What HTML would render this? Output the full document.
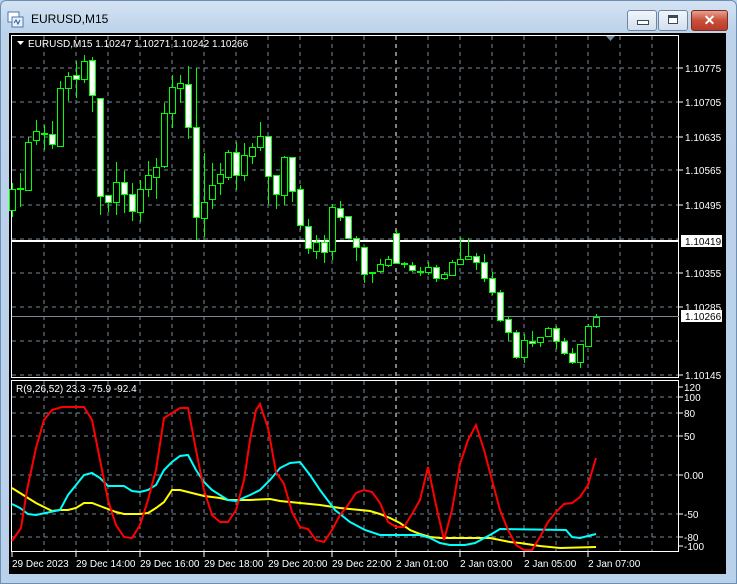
<!DOCTYPE html>
<html><head><meta charset="utf-8"><style>
html,body{margin:0;padding:0;width:737px;height:584px;overflow:hidden;background:#b9d1ea;font-family:"Liberation Sans",sans-serif}
#win{position:absolute;left:0;top:0;width:735px;height:582px;border:1px solid #6d8fb3;border-radius:6px 6px 0 0;background:linear-gradient(#d4e3f3,#bcd3ea 30px,#b9d1ea)}
#title{position:absolute;left:30px;top:11px;font-size:12px;color:#000}
.btn{position:absolute;top:9px;height:19px;border:1px solid #6f86a3;border-radius:3px;background:linear-gradient(#f2f6fb,#d2dfee)}
svg{position:absolute;left:0;top:0}
</style></head><body>
<div id="win">
<svg width="18" height="18" style="left:6px;top:10px"><rect x="1" y="1" width="11" height="10" fill="#fff" stroke="#4a7ab0"/><rect x="5" y="6" width="11" height="10" fill="#e8f0fa" stroke="#4a7ab0"/><path d="M7 12l2-3 2 4 2-4" stroke="#2a5a90" fill="none"/></svg>
<div id="title">EURUSD,M15</div>
<div class="btn" style="left:626px;width:28px"><div style="position:absolute;left:9px;top:9px;width:10px;height:3px;background:#fff;border:1px solid #3a4a5a"></div></div>
<div class="btn" style="left:657px;width:28px"><div style="position:absolute;left:9px;top:4px;width:8px;height:7px;border:1px solid #3a4a5a;background:#fff;box-shadow:inset 0 2px 0 #3a4a5a"></div></div>
<div class="btn" style="left:690px;width:35px;border-color:#7a2a20;background:linear-gradient(#e8a090,#c8503a 50%,#b83a28)"><div style="position:absolute;left:0;right:0;top:0;text-align:center;color:#fff;font-weight:bold;font-size:14px;line-height:19px">✕</div></div>
</div>
<svg id="c" width="737" height="584" font-family="Liberation Sans, sans-serif" font-size="10"></svg>
<script>
var s='';
s+='<rect x="9" y="33" width="717" height="541" fill="#000"/>';
var gx=[44,76,108,140,172,204,236,268,300,332,364,396,428,460,492,524,556,588,620,652];
var gy=[68,102,137,170,205,239,273,307,341,375];
var iy=[397,413,436,475,514,537];
gx.forEach(function(x){var c=x==396?'#fff':'#778899';
s+='<line x1="'+x+'" y1="36" x2="'+x+'" y2="377" stroke="'+c+'" stroke-dasharray="4,4"/>';
s+='<line x1="'+x+'" y1="381" x2="'+x+'" y2="551" stroke="'+c+'" stroke-dasharray="4,4"/>';});
gy.forEach(function(y){s+='<line x1="12" y1="'+y+'" x2="678" y2="'+y+'" stroke="#778899" stroke-dasharray="4,4"/>';});
iy.forEach(function(y){s+='<line x1="12" y1="'+y+'" x2="678" y2="'+y+'" stroke="#778899" stroke-dasharray="4,4"/>';});
s+='<rect x="11.5" y="35.5" width="667" height="342" fill="none" stroke="#fff"/>';
s+='<rect x="11.5" y="380.5" width="667" height="171" fill="none" stroke="#fff"/>';
s+='<line x1="12" y1="241" x2="679" y2="241" stroke="#fff" stroke-width="2"/>';
s+='<line x1="12" y1="316.5" x2="679" y2="316.5" stroke="#778899"/>';
var C=[[183,217,210,189],[173,207,188,188],[137,190,190,142],[120,145,140,131],[125,150,133,134],[121,149,134,144],[81,147,146,88],[72,101,88,76],[61,98,75,79],[55,83,79,61],[57,112,60,95],[98,215,98,196],[195,212,195,202],[162,215,202,182],[171,213,182,194],[183,221,194,211],[180,222,212,189],[161,197,189,175],[158,199,177,167],[103,168,166,113],[75,128,113,87],[75,103,88,83],[66,139,84,127],[68,240,127,217],[153,237,218,202],[163,209,199,185],[163,195,183,174],[150,180,177,152],[142,190,152,175],[143,181,175,155],[143,164,156,147],[122,151,147,136],[136,204,136,176],[175,209,175,194],[156,205,195,157],[157,202,157,191],[185,230,189,225],[219,254,226,248],[235,259,251,242],[235,263,242,252],[204,260,251,207],[201,221,208,217],[216,238,216,238],[236,261,238,247],[247,283,247,274],[272,283,273,272],[259,273,271,264],[256,267,265,259],[230,263,233,263],[262,268,263,263],[262,272,265,270],[267,276,271,271],[262,275,272,267],[265,282,267,278],[272,280,278,274],[260,275,275,262],[237,264,264,259],[238,259,259,256],[253,270,256,262],[254,282,262,278],[272,295,278,292],[290,322,292,320],[317,341,319,332],[330,359,332,357],[334,363,357,340],[331,347,341,343],[337,347,342,337],[327,336,336,328],[326,349,328,341],[338,355,341,353],[348,364,353,362],[344,368,362,344],[324,346,346,326],[314,328,326,317]];
C.forEach(function(k,i){var x=12+8*i,t=Math.min(k[2],k[3]),b=Math.max(k[2],k[3]),bear=k[3]>k[2];
s+='<line x1="'+(x+.5)+'" y1="'+k[0]+'" x2="'+(x+.5)+'" y2="'+k[1]+'" stroke="#0f0"/>';
s+='<rect x="'+(x-2.5)+'" y="'+(t+.5)+'" width="6" height="'+Math.max(b-t,1)+'" fill="'+(bear?'#fff':'#000')+'" stroke="#0f0"/>';});
function pl(p,c){s+='<polyline fill="none" stroke="'+c+'" stroke-width="2" points="'+p+'"/>';}
pl('12,488 20,493 28,498 36,503 44,507 52,511 60,510 68,510 76,508 84,503 92,503 100,506 108,509 116,512 124,514 140,514 148,513 156,508 164,502 172,490 180,490 188,492 196,494 204,496 212,497 220,498 228,500 250,500 270,499 280,501 300,503 320,505 340,508 370,511 380,514 390,518 400,523 410,530 420,534 430,537 440,538 490,538 500,540 510,542 520,543 540,546 560,548 596,547','#ff0');
pl('12,504 20,508 28,514 36,515 60,510 68,495 76,485 84,475 92,473 100,478 108,486 124,486 132,491 140,492 148,490 156,485 164,470 172,462 180,456 188,455 196,470 204,482 212,490 220,495 228,500 236,501 250,495 260,490 270,480 280,468 290,463 300,462 310,475 320,490 335,510 350,522 365,530 380,535 412,535 420,535 430,538 440,543 450,545 465,545 475,543 490,535 500,529 566,530 572,537 580,538 588,536 596,534','#0ff');
pl('12,541 21,528 27,490 36,448 44,420 52,410 62,407 84,407 92,420 100,460 108,500 116,525 124,537 132,538 140,525 148,500 156,470 164,418 172,413 180,408 188,408 196,450 204,490 212,515 220,522 228,522 236,510 244,480 250,440 256,410 260,404 268,428 276,472 284,484 292,512 300,527 308,529 316,540 324,542 332,530 340,515 348,505 356,493 364,490 372,492 380,503 388,522 396,527 404,527 412,514 420,500 428,467 436,505 444,540 452,510 460,464 468,440 476,425 484,450 492,480 500,510 508,530 516,545 524,550 532,550 540,537 548,522 556,512 564,504 572,503 580,497 588,485 596,458','#f00');
var pr=[[68,'1.10775'],[102,'1.10705'],[137,'1.10635'],[170,'1.10565'],[205,'1.10495'],[273,'1.10355'],[307,'1.10285'],[375,'1.10145']];
pr.forEach(function(p){s+='<line x1="679" y1="'+p[0]+'" x2="683" y2="'+p[0]+'" stroke="#fff"/><text x="685" y="'+(p[0]+4)+'" fill="#fff">'+p[1]+'</text>';});
[[241,'1.10419'],[316,'1.10266']].forEach(function(p){s+='<rect x="681" y="'+(p[0]-6)+'" width="41" height="12" fill="#fff"/><text x="685" y="'+(p[0]+4)+'" fill="#000">'+p[1]+'</text>';});
var il=[[387,'120'],[397,'100'],[413,'80'],[436,'50'],[475,'0.00'],[514,'-50'],[537,'-80'],[546,'-100']];
il.forEach(function(p){s+='<line x1="679" y1="'+p[0]+'" x2="683" y2="'+p[0]+'" stroke="#fff"/><text x="684" y="'+(p[0]+4)+'" fill="#fff">'+p[1]+'</text>';});
var tl=[[12,'29 Dec 2023'],[76,'29 Dec 14:00'],[140,'29 Dec 16:00'],[204,'29 Dec 18:00'],[268,'29 Dec 20:00'],[332,'29 Dec 22:00'],[396,'2 Jan 01:00'],[460,'2 Jan 03:00'],[524,'2 Jan 05:00'],[588,'2 Jan 07:00']];
tl.forEach(function(p){s+='<line x1="'+p[0]+'" y1="552" x2="'+p[0]+'" y2="557" stroke="#fff"/><text x="'+p[0]+'" y="567" fill="#fff">'+p[1]+'</text>';});
s+='<path d="M17 41h7l-3.5 4z" fill="#fff"/><text x="28" y="47" fill="#fff">EURUSD,M15  1.10247 1.10271 1.10242 1.10266</text>';
s+='<path d="M606 36h9l-4.5 5z" fill="#778899"/>';
s+='<text x="16" y="392" fill="#fff">R(9,26,52) 23.3 -75.9 -92.4</text>';
document.getElementById('c').innerHTML=s;
</script>
</body></html>
